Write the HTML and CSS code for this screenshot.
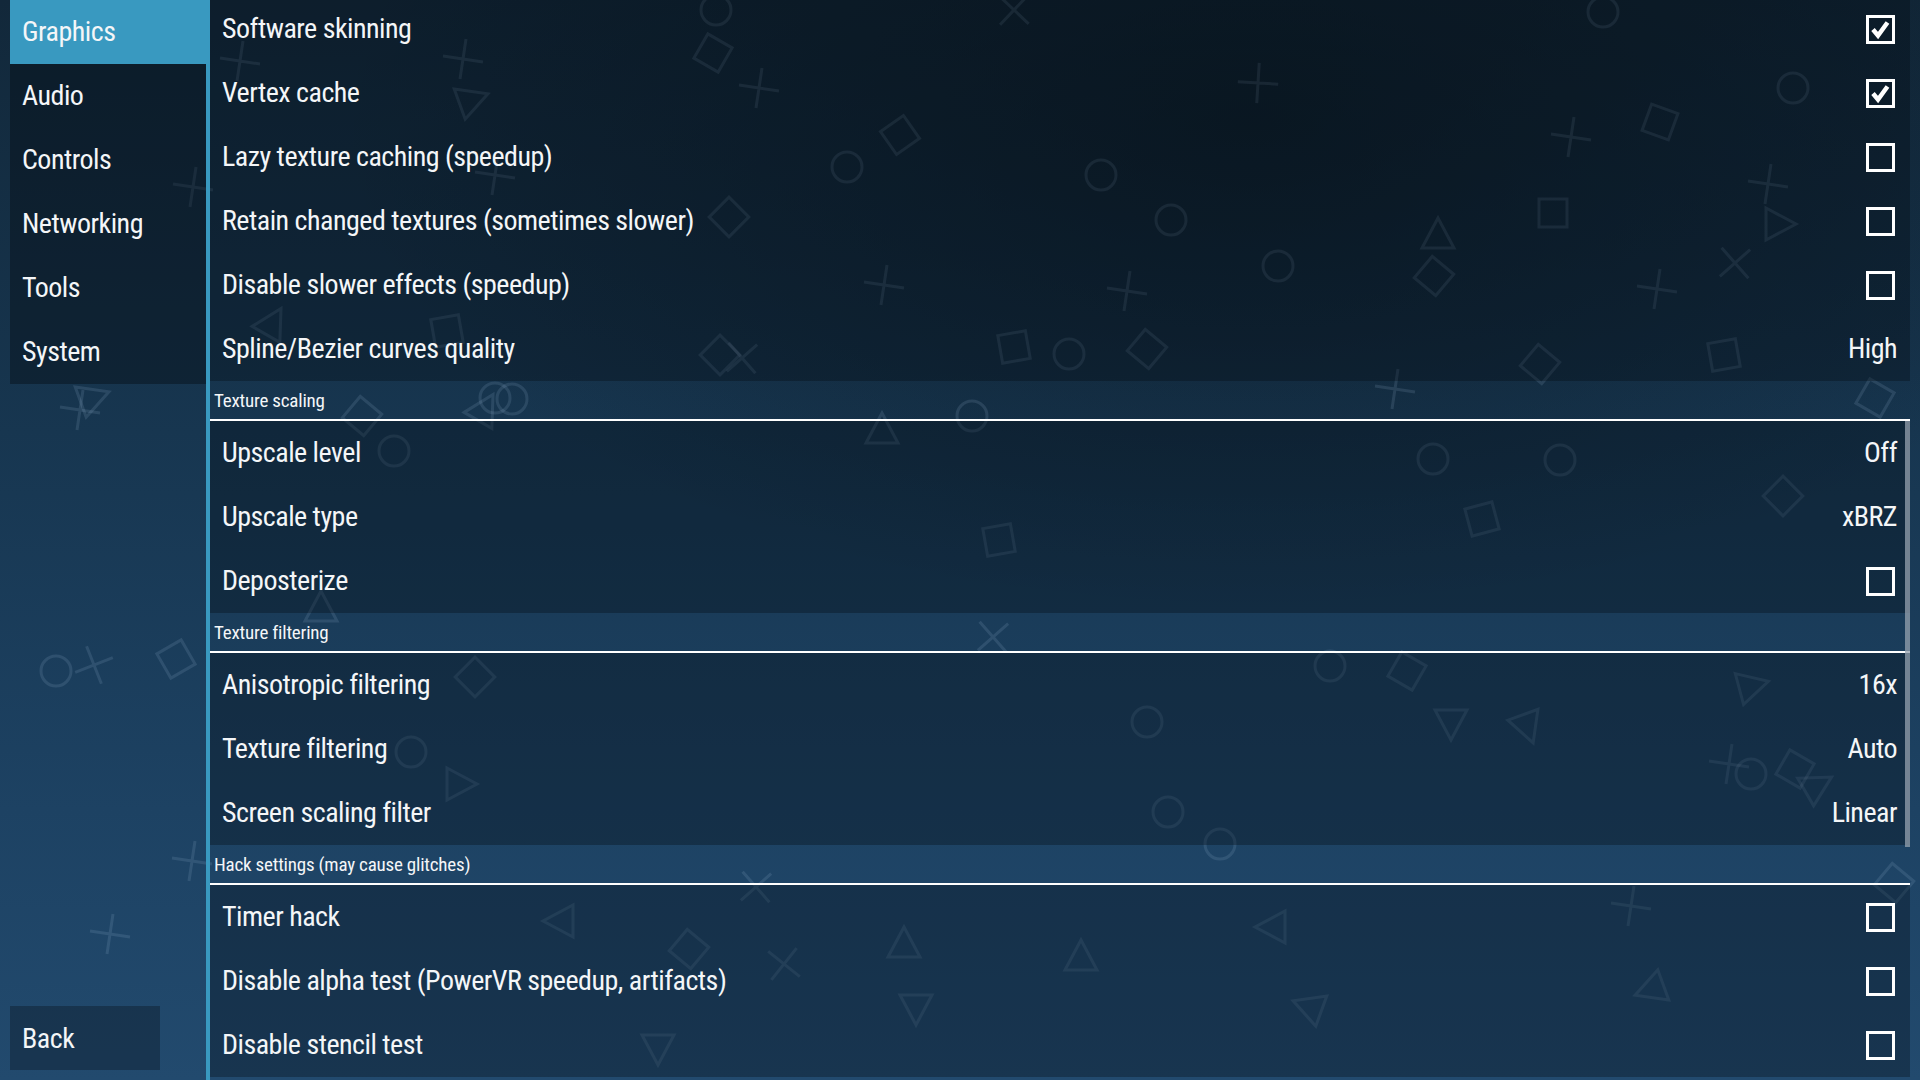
FILE: index.html
```html
<!DOCTYPE html>
<html lang="en">
<head>
<meta charset="utf-8">
<title>Settings - Graphics</title>
<link rel="stylesheet" href="styles.css">
</head>
<body>
<div class="screen">
  <svg class="bg-shapes" width="1920" height="1080" viewBox="0 0 1920 1080" aria-hidden="true">
    <defs>
      <circle id="c" cx="0" cy="0" r="15"/>
      <path id="x" d="M-20 -3 L20 3 M3 -20 L-3 20"/>
      <rect id="s" x="-14" y="-14" width="28" height="28"/>
      <polygon id="t" points="-12,-16 18,0 -12,16"/>
    </defs>
    <g class="shape">
      <use href="#c" x="716" y="10"/><use href="#c" x="1603" y="12"/><use href="#c" x="1793" y="88"/>
      <use href="#c" x="847" y="167"/><use href="#c" x="1101" y="175"/><use href="#c" x="1171" y="220"/>
      <use href="#c" x="1278" y="266"/><use href="#c" x="1069" y="354"/><use href="#c" x="495" y="398"/>
      <use href="#c" x="512" y="399"/><use href="#c" x="972" y="416"/><use href="#c" x="394" y="451"/>
      <use href="#c" x="1433" y="459"/><use href="#c" x="1560" y="460"/><use href="#c" x="56" y="671"/>
      <use href="#c" x="1330" y="666"/><use href="#c" x="1147" y="722"/><use href="#c" x="411" y="752"/>
      <use href="#c" x="1751" y="774"/><use href="#c" x="1168" y="812"/><use href="#c" x="1220" y="844"/>

      <use href="#x" transform="translate(1014 10) rotate(35)"/><use href="#x" transform="translate(463 59)"/>
      <use href="#x" transform="translate(240 61)"/><use href="#x" transform="translate(759 88)"/>
      <use href="#x" transform="translate(1258 83) rotate(-5)"/><use href="#x" transform="translate(1571 137)"/>
      <use href="#x" transform="translate(495 175)"/><use href="#x" transform="translate(193 187)"/>
      <use href="#x" transform="translate(1768 184)"/><use href="#x" transform="translate(1735 263) rotate(40)"/>
      <use href="#x" transform="translate(884 285)"/><use href="#x" transform="translate(1127 291)"/>
      <use href="#x" transform="translate(1657 289)"/><use href="#x" transform="translate(742 358) rotate(40)"/>
      <use href="#x" transform="translate(1395 389)"/><use href="#x" transform="translate(80 410)"/>
      <use href="#x" transform="translate(993 637) rotate(40)"/><use href="#x" transform="translate(94 665) rotate(-30)"/>
      <use href="#x" transform="translate(1729 764)"/><use href="#x" transform="translate(192 861)"/>
      <use href="#x" transform="translate(756 887) rotate(40)"/><use href="#x" transform="translate(1631 906)"/>
      <use href="#x" transform="translate(110 934)"/><use href="#x" transform="translate(784 964) rotate(30)"/>

      <use href="#s" transform="translate(713 53) rotate(30)"/><use href="#s" transform="translate(1660 122) rotate(20)"/>
      <use href="#s" transform="translate(900 135) rotate(-35)"/><use href="#s" transform="translate(729 217) rotate(45)"/>
      <use href="#s" transform="translate(1553 213) rotate(0)"/><use href="#s" transform="translate(1434 276) rotate(40)"/>
      <use href="#s" transform="translate(447 331) rotate(-10)"/><use href="#s" transform="translate(720 355) rotate(45)"/>
      <use href="#s" transform="translate(1014 347) rotate(-10)"/><use href="#s" transform="translate(1147 349) rotate(40)"/>
      <use href="#s" transform="translate(1540 364) rotate(40)"/><use href="#s" transform="translate(1724 355) rotate(-10)"/>
      <use href="#s" transform="translate(1875 398) rotate(30)"/><use href="#s" transform="translate(362 416) rotate(40)"/>
      <use href="#s" transform="translate(1783 496) rotate(45)"/><use href="#s" transform="translate(1482 519) rotate(-15)"/>
      <use href="#s" transform="translate(999 540) rotate(-10)"/><use href="#s" transform="translate(176 659) rotate(-30)"/>
      <use href="#s" transform="translate(475 677) rotate(45)"/><use href="#s" transform="translate(1407 671) rotate(30)"/>
      <use href="#s" transform="translate(1795 769) rotate(30)"/><use href="#s" transform="translate(1894 883) rotate(40)"/>
      <use href="#s" transform="translate(689 949) rotate(40)"/>

      <use href="#t" transform="translate(471 100) rotate(-20)"/><use href="#t" transform="translate(1438 236) rotate(-90)"/>
      <use href="#t" transform="translate(1778 224) rotate(0)"/><use href="#t" transform="translate(272 324) rotate(-60)"/>
      <use href="#t" transform="translate(484 410) rotate(-60)"/><use href="#t" transform="translate(92 398) rotate(-20)"/>
      <use href="#t" transform="translate(882 431) rotate(-90)"/><use href="#t" transform="translate(321 609) rotate(-90)"/>
      <use href="#t" transform="translate(1751 686) rotate(-15)"/><use href="#t" transform="translate(1451 722) rotate(90)"/>
      <use href="#t" transform="translate(1527 726) rotate(70)"/><use href="#t" transform="translate(459 784) rotate(0)"/>
      <use href="#t" transform="translate(1816 786) rotate(-30)"/><use href="#t" transform="translate(561 921) rotate(180)"/>
      <use href="#t" transform="translate(1273 927) rotate(180)"/><use href="#t" transform="translate(904 945) rotate(-90)"/>
      <use href="#t" transform="translate(1081 958) rotate(-90)"/><use href="#t" transform="translate(1652 989) rotate(160)"/>
      <use href="#t" transform="translate(916 1007) rotate(90)"/><use href="#t" transform="translate(1310 1007) rotate(200)"/>
      <use href="#t" transform="translate(658 1047) rotate(90)"/>
    </g>
  </svg>

  <div class="layout">
    <nav class="sidebar">
      <ul class="tabs">
        <li class="tab active">Graphics</li>
        <li class="tab">Audio</li>
        <li class="tab">Controls</li>
        <li class="tab">Networking</li>
        <li class="tab">Tools</li>
        <li class="tab">System</li>
      </ul>
      <button class="back">Back</button>
    </nav>
    <div class="divider"></div>
    <main class="panel">
      <div class="list">
        <div class="row"><span>Software skinning</span><svg class="check" width="29" height="29" viewBox="0 0 29 29"><rect x="1.5" y="1.5" width="26" height="26"/><path class="tick" d="M7 14.5 L12 20.5 L21.5 7.5"/></svg></div>
        <div class="row"><span>Vertex cache</span><svg class="check" width="29" height="29" viewBox="0 0 29 29"><rect x="1.5" y="1.5" width="26" height="26"/><path class="tick" d="M7 14.5 L12 20.5 L21.5 7.5"/></svg></div>
        <div class="row"><span>Lazy texture caching (speedup)</span><svg class="check" width="29" height="29" viewBox="0 0 29 29"><rect x="1.5" y="1.5" width="26" height="26"/></svg></div>
        <div class="row"><span>Retain changed textures (sometimes slower)</span><svg class="check" width="29" height="29" viewBox="0 0 29 29"><rect x="1.5" y="1.5" width="26" height="26"/></svg></div>
        <div class="row"><span>Disable slower effects (speedup)</span><svg class="check" width="29" height="29" viewBox="0 0 29 29"><rect x="1.5" y="1.5" width="26" height="26"/></svg></div>
        <div class="row"><span>Spline/Bezier curves quality</span><span class="value">High</span></div>

        <div class="header">Texture scaling</div>
        <div class="row"><span>Upscale level</span><span class="value">Off</span></div>
        <div class="row"><span>Upscale type</span><span class="value">xBRZ</span></div>
        <div class="row"><span>Deposterize</span><svg class="check" width="29" height="29" viewBox="0 0 29 29"><rect x="1.5" y="1.5" width="26" height="26"/></svg></div>

        <div class="header">Texture filtering</div>
        <div class="row"><span>Anisotropic filtering</span><span class="value">16x</span></div>
        <div class="row"><span>Texture filtering</span><span class="value">Auto</span></div>
        <div class="row"><span>Screen scaling filter</span><span class="value">Linear</span></div>

        <div class="header">Hack settings (may cause glitches)</div>
        <div class="row"><span>Timer hack</span><svg class="check" width="29" height="29" viewBox="0 0 29 29"><rect x="1.5" y="1.5" width="26" height="26"/></svg></div>
        <div class="row"><span>Disable alpha test (PowerVR speedup, artifacts)</span><svg class="check" width="29" height="29" viewBox="0 0 29 29"><rect x="1.5" y="1.5" width="26" height="26"/></svg></div>
        <div class="row"><span>Disable stencil test</span><svg class="check" width="29" height="29" viewBox="0 0 29 29"><rect x="1.5" y="1.5" width="26" height="26"/></svg></div>
      </div>
      <div class="scrollbar"></div>
    </main>
  </div>
</div>
</body>
</html>
```

FILE: styles.css
```css
html, body {
  margin: 0;
  padding: 0;
}

body {
  width: 1920px;
  height: 1080px;
  overflow: hidden;
  font-family: "Roboto Condensed", "Liberation Sans Narrow", "DejaVu Sans Condensed", Roboto, sans-serif;
  color: #f4f6f8;
}

.screen {
  position: relative;
  width: 1920px;
  height: 1080px;
  background:
    radial-gradient(ellipse 1300px 700px at 1250px 120px, rgba(8, 18, 26, 0.55), rgba(8, 18, 26, 0) 70%),
    linear-gradient(to bottom, #12283a 0%, #173650 40%, #1d4263 75%, #224a6e 100%);
}

.bg-shapes {
  position: absolute;
  left: 0;
  top: 0;
}

.shape use {
  fill: none;
  stroke: rgba(170, 200, 225, 0.14);
  stroke-width: 3;
}

.layout {
  position: relative;
  display: flex;
  height: 1080px;
}

.sidebar {
  width: 196px;
  margin-left: 10px;
  padding-bottom: 10px;
  display: flex;
  flex-direction: column;
  justify-content: space-between;
}

.tabs {
  list-style: none;
  margin: 0;
  padding: 0;
  background: rgba(2, 8, 14, 0.38);
}

.tab {
  height: 64px;
  line-height: 64px;
  padding-left: 12px;
  font-size: 28px;
  letter-spacing: -0.5px;
}

.tab.active {
  background: #3999c0;
}

.back {
  width: 150px;
  height: 64px;
  padding: 0 0 0 12px;
  border: none;
  text-align: left;
  font-family: inherit;
  font-size: 28px;
  letter-spacing: -0.5px;
  color: #f4f6f8;
  background: rgba(2, 8, 14, 0.3);
}

.divider {
  width: 4px;
  background: #3999c0;
}

.panel {
  position: relative;
  flex: 1;
  margin-right: 10px;
  overflow: hidden;
}

.list {
  margin-top: -3px;
}

.row {
  display: flex;
  justify-content: space-between;
  align-items: center;
  height: 64px;
  padding: 0 13px 0 12px;
  font-size: 28px;
  letter-spacing: -0.5px;
  line-height: 64px;
  background: rgba(2, 8, 14, 0.32);
}

.value {
  text-align: right;
}

.check {
  display: block;
  margin-right: 2px;
}

.check rect {
  fill: none;
  stroke: #ffffff;
  stroke-width: 3;
}

.check .tick {
  fill: none;
  stroke: #ffffff;
  stroke-width: 4.5;
  stroke-linecap: butt;
  stroke-linejoin: miter;
}

.header {
  height: 38px;
  line-height: 40px;
  padding-left: 4px;
  font-size: 19px;
  letter-spacing: -0.2px;
  border-bottom: 2px solid #ffffff;
}

.scrollbar {
  position: absolute;
  right: 0;
  top: 421px;
  width: 5px;
  height: 426px;
  background: rgba(150, 162, 175, 0.75);
}
```
